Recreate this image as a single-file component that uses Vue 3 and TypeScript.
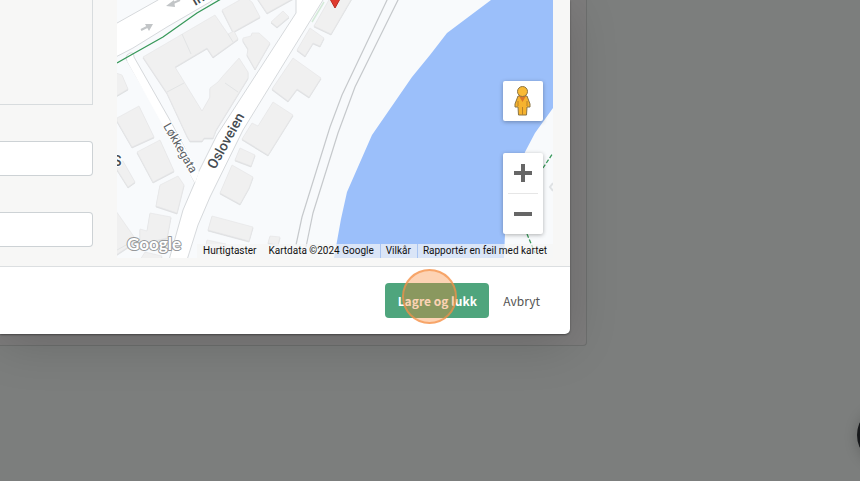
<script setup lang="ts">
interface MapLink {
  label: string
  href: string
}

const buildings: string[] = [
  '222,10 245,-3 252,2 260,17 233,32',
  '257,-2 267,13 294,-2',
  '271,22 283,11 289,17 277,27',
  '143,57 215,15 228,34 234,31 238,39 213,57 207,48 175,67 202,111 210,97 210,88 218,82 222,77 239,58 248,72 248,78 216,130 213,138 204,138 202,141 190,141 187,136 167,93',
  '243,38 251,36 252,33 259,33 270,43 255,69 247,55 248,49 243,41',
  '314,26 330,-2 352,-2 331,34',
  '297,50 310,28 324,38 320,46 313,43 305,56',
  '293,58 321,78 309,97 297,89 288,101 272,89',
  '242,139 252,123 258,126 273,102 293,115 268,155',
  '240,148 255,155 251,166 235,160',
  '232,165 253,177 249,188 240,204 220,193',
  '212,216 253,227 249,241 208,230',
  '270,236 280,237 278,245 268,243',
  '207,240 226,244 222,254 205,251',
  '117,118 139,106 154,137 132,147 117,121',
  '137,152 160,140 174,171 153,182',
  '116,73 122,75 128,89 116,96',
  '116,162 123,161 135,182 128,187 116,168',
  '160,185 178,176 184,185 177,213 156,206',
  '150,213 171,217 167,238 140,244 140,229 147,231',
  '116,211 137,241 116,255',
  '145,252 162,256 160,262 140,260'
]

const mapLinks: MapLink[] = [
  { label: 'Vilkår', href: '#terms' },
  { label: 'Rapportér en feil med kartet', href: '#report' }
]
</script>

<template>
  <main class="page">
    <section class="panel">
      <div class="dialog" role="dialog" aria-label="Adresse">
        <div class="dialog-body">
          <form class="fields" @submit.prevent>
            <div class="group"></div>
            <input class="field" type="text" aria-label="Felt 1" />
            <input class="field" type="text" aria-label="Felt 2" />
          </form>

          <div class="map">
            <svg class="canvas" viewBox="117 0 436 258" preserveAspectRatio="xMaxYMin slice" aria-hidden="true">
              <rect x="117" width="436" height="258" fill="#f8fafc" />

              <path class="water" d="M491 0 447 33 430 55 412 77 372 135 347 192 341 219 334 258H504L505 234 525 152 535 133 553 108V0Z" />

              <g class="building-shadows">
                <polygon v-for="shape in buildings" :key="shape" :points="shape" transform="translate(0 1)" />
              </g>
              <g class="buildings">
                <polygon v-for="shape in buildings" :key="shape" :points="shape" />
              </g>
              <path class="wall" d="M182 34 191 54M167 92 184 83M225 83 238 92M228 34 233 42M117 250 137 239" />

              <path class="road" d="M110 27 158 0 165 -5H218L210 2 167 27 133 48 110 60Z" />
              <path class="road" d="M126 59Q126 54 130 53T134 57L171 122 198 173 195 183 163 122Z" />
              <path class="road" d="M296 -2 296 13 217 135 198 173 195 182 183 210 176 235 169 260H187L198 225 210 197 243 130 323 0V-2Z" />
              <path d="M127 61 132 57 199 172 195 183Z" fill="#fff" />
              <path d="M324 2 312 22" stroke="#d5ead9" stroke-width="1.5" />

              <path class="rail" d="M388 -2 342 95 330 127 302 217 296 245" />
              <path class="rail" d="M399 -2 355 87 338 133 313 213 306 247" />
              <path class="cycle" d="M117 63 131 55 163 37 197 13 221 -1" />
              <path class="cycle dashed" d="M543 168 553 153M527 234 535 253" />
              <path d="M553 183 550 187 553 191" fill="none" stroke="#dfe2e4" stroke-width="2" />

              <g class="arrows">
                <path d="M141 30 149 26" />
                <path d="M180 0 171 4" />
              </g>
              <path d="M145 24 153 24 149 31ZM174 0 166 6 175 7Z" fill="#c2c5c7" />

              <text class="street" transform="translate(163 126) rotate(60)">Løkkegata</text>
              <text class="street major" transform="translate(215 170) rotate(-61)">Osloveien</text>
              <text class="street major" transform="translate(195 6) rotate(-30)">Inn</text>
              <text class="street major" x="113" y="166">S</text>
              <path d="M330 -1H340L335 8Z" fill="#df3a2e" stroke="#b92920" />
              <text class="logo" x="127" y="250">Google</text>
            </svg>

            <div class="controls">
              <button class="pegman" type="button" aria-label="Street View">
                <svg viewBox="0 0 20 32" width="20" height="32" aria-hidden="true">
                  <path d="M5 11H14L17 19V22H14L13.500 30H5.500L5 22H2V19Z" fill="#f6b32f" stroke="#8a7444" />
                  <path d="M6 11H13L9.500 17Z" fill="#dc7727" />
                  <path d="M9.500 22V30M5 16V21M14 16V21" stroke="#b88228" fill="none" />
                  <circle cx="9.500" cy="6.500" r="5" fill="#f9ba35" stroke="#8a7444" />
                </svg>
              </button>
              <div class="zoom">
                <button type="button" aria-label="Zoom inn">
                  <svg viewBox="0 0 18 18" width="18" height="18" aria-hidden="true"><path d="M7 0h4v7h7v4h-7v7H7v-7H0V7h7Z" fill="#666" /></svg>
                </button>
                <button type="button" aria-label="Zoom ut">
                  <svg viewBox="0 0 18 18" width="18" height="18" aria-hidden="true"><path d="M0 7h18v4H0Z" fill="#666" /></svg>
                </button>
              </div>
            </div>

            <div class="attribution">
              <button type="button">Hurtigtaster</button>
              <span>Kartdata ©2024 Google</span>
              <a v-for="link in mapLinks" :key="link.href" :href="link.href">{{ link.label }}</a>
            </div>
          </div>
        </div>

        <footer class="actions">
          <button class="save" type="button">Lagre og lukk<i class="pointer"></i></button>
          <button class="cancel" type="button">Avbryt</button>
        </footer>
      </div>
    </section>
    <button class="chat" type="button" aria-label="Chat"></button>
  </main>
</template>

<style>
body {
  background: #7c7e7d;
  overflow: hidden;
}
</style>

<style scoped>
.page {
  min-height: 100vh;
  font-family: "Noto Sans CJK JP", "Open Sans", sans-serif;
}
button {
  border: 0;
  padding: 0;
  background: none;
  font: inherit;
}
.panel {
  margin-right: 273px;
  padding: 0 16px 11px 0;
  border: solid #6d6f6e;
  border-width: 0 1px 1px 0;
  border-radius: 0 0 4px 0;
  background: #7d7c7c;
}
.dialog {
  background: #fff;
  border-radius: 0 0 5px 0;
  box-shadow: 0 10px 50px rgba(0, 0, 0, 0.16), 0 1px 2px rgba(0, 0, 0, 0.4);
}
.dialog-body {
  display: flex;
  gap: 24px;
  padding: 0 17px 8px 0;
  background: #f7f7f6;
  border-bottom: 1px solid #dcdfe1;
}
.fields {
  flex: 1;
  min-width: 0;
  display: flex;
  flex-direction: column;
  gap: 36px;
}
.group {
  box-sizing: border-box;
  height: 105px;
  border: solid #d8dcde;
  border-width: 0 1px 1px 0;
}
.field {
  box-sizing: border-box;
  width: 100%;
  height: 35px;
  padding: 0 12px;
  border: 1px solid #cdd2d5;
  border-left: 0;
  border-radius: 0 4px 4px 0;
  background: #fff;
  font: inherit;
}
.map {
  position: relative;
  flex: 0 0 436px;
  height: 258px;
  overflow: hidden;
}
.canvas {
  display: block;
  width: 100%;
  height: 100%;
}
.water {
  fill: #9bbffa;
}
.buildings {
  fill: #f0f0f0;
  stroke: #e6e7e8;
  stroke-width: 0.7;
}
.building-shadows {
  fill: #dcdee0;
  stroke: #dcdee0;
  stroke-width: 0.7;
}
.wall {
  fill: none;
  stroke: #e2e4e5;
}
.road {
  fill: #fff;
  stroke: #d6d9dc;
}
.rail {
  fill: none;
  stroke: #c6c9cc;
  stroke-width: 1.2;
}
.cycle {
  fill: none;
  stroke: #38995a;
  stroke-width: 1.3;
}
.dashed {
  stroke-dasharray: 4 2;
}
.arrows {
  fill: none;
  stroke: #c2c5c7;
  stroke-width: 2;
}
.street {
  fill: #5c6266;
  stroke: #fff;
  stroke-width: 2;
  paint-order: stroke;
  font: 400 12px Roboto, sans-serif;
}
.major {
  fill: #454b50;
  font-size: 14px;
  font-weight: 500;
}
.logo {
  fill: #fff;
  stroke: #96999b;
  stroke-width: 2;
  stroke-linejoin: round;
  paint-order: stroke;
  font: 700 17px Lato, sans-serif;
}
.controls {
  position: absolute;
  right: 10px;
  bottom: 24px;
  display: flex;
  flex-direction: column;
  gap: 32px;
  width: 40px;
}
.pegman,
.zoom {
  background: #fff;
  border-radius: 2px;
  box-shadow: 0 1px 4px rgba(0, 0, 0, 0.3);
}
.pegman {
  display: grid;
  place-items: center;
  height: 40px;
}
.zoom {
  display: flex;
  flex-direction: column;
  align-items: center;
}
.zoom button {
  display: grid;
  place-items: center;
  width: 30px;
  height: 40px;
}
.zoom button + button {
  height: 41px;
  border-top: 1px solid #e6e6e6;
}
.attribution {
  position: absolute;
  right: 0;
  bottom: 0;
  display: flex;
  font: 10px/14px Roboto, sans-serif;
  color: #111;
}
.attribution > * {
  padding: 0 6px;
  background: rgba(245, 245, 245, 0.7);
  color: inherit;
  text-decoration: none;
  white-space: nowrap;
}
.attribution a {
  padding-left: 5px;
  border-left: 1px solid #a9c5f2;
}
.actions {
  display: flex;
  justify-content: flex-end;
  align-items: center;
  gap: 14px;
  padding: 16px 30px 16px 0;
  font-size: 12px;
  line-height: 20px;
}
.save {
  position: relative;
  width: 104px;
  height: 35px;
  border-radius: 4px;
  background: #4fa57d;
  color: #fff;
  font-weight: 700;
}
.pointer {
  position: absolute;
  box-sizing: border-box;
  left: 17px;
  top: -14px;
  width: 55px;
  height: 55px;
  border: 2px solid rgba(244, 145, 72, 0.7);
  border-radius: 50%;
  background: rgba(248, 130, 40, 0.35);
}
.cancel {
  color: #555;
}
.chat {
  position: fixed;
  left: calc(100% - 3px);
  top: 405px;
  width: 60px;
  height: 60px;
  border-radius: 50%;
  background: #17191b;
  box-shadow: 0 2px 14px rgba(0, 0, 0, 0.2);
}
</style>
